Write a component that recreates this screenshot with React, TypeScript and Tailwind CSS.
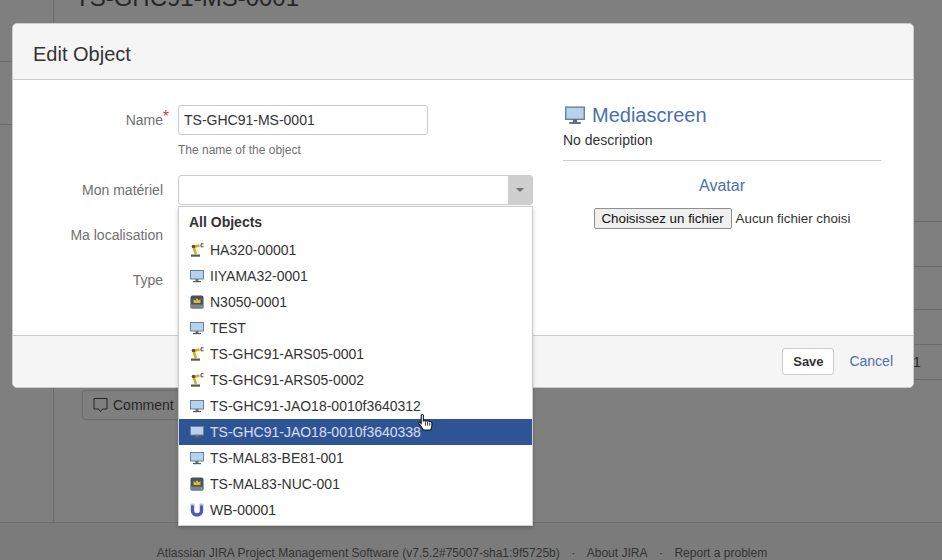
import React from 'react';

const OBJECTS = [
  { label: 'HA320-00001', icon: 'robot' },
  { label: 'IIYAMA32-0001', icon: 'screen' },
  { label: 'N3050-0001', icon: 'nuc' },
  { label: 'TEST', icon: 'screen' },
  { label: 'TS-GHC91-ARS05-0001', icon: 'robot' },
  { label: 'TS-GHC91-ARS05-0002', icon: 'robot' },
  { label: 'TS-GHC91-JAO18-0010f3640312', icon: 'screen' },
  { label: 'TS-GHC91-JAO18-0010f3640338', icon: 'screen', active: true },
  { label: 'TS-MAL83-BE81-001', icon: 'screen' },
  { label: 'TS-MAL83-NUC-001', icon: 'nuc' },
  { label: 'WB-00001', icon: 'magnet' },
];

function ScreenIcon({ size = 14 }: { size?: number }) {
  return (
    <svg width={size} height={size} viewBox="0 0 14 14">
      <rect x="0.5" y="1.5" width="13" height="8.5" fill="#b4d3ef" stroke="#71808c" />
      <rect x="5.5" y="10" width="3" height="2" fill="#5f6f7c" />
      <rect x="3" y="12" width="8" height="1.2" fill="#4f5d68" />
    </svg>
  );
}

function RobotIcon() {
  return (
    <svg width="14" height="14" viewBox="0 0 14 14">
      <path d="M6 11L3.500 4l6-1.500" fill="none" stroke="#dcaa1e" strokeWidth="2.600" />
      <circle cx="3.500" cy="3.500" r="1.800" fill="#57523a" />
      <path d="M13.500 .8h-2.500v3h2.500" fill="none" stroke="#4a4a3a" />
      <rect x="1" y="11.500" width="9" height="2.200" fill="#5b5b4a" />
    </svg>
  );
}

function NucIcon() {
  return (
    <svg width="14" height="14" viewBox="0 0 14 14">
      <rect x="0.5" y="0.5" width="13" height="13" rx="2" fill="#46535e" />
      <rect x="0.5" y="9.5" width="13" height="4" rx="1" fill="#75838d" />
      <path d="M3.500 8V3.800l1.800 1.700L7 3l1.700 2.500 1.800-1.700V8z" fill="#e3b92d" />
      <rect x="10.500" y="11" width="1.500" height="1.200" fill="#6cc04a" />
    </svg>
  );
}

function MagnetIcon() {
  return (
    <svg width="14" height="14" viewBox="0 0 14 14">
      <path d="M2.500 1v6.500a4.500 4.500 0 0 0 9 0V1" fill="none" stroke="#5257bd" strokeWidth="3.400" />
      <path d="M.8 1.500h3.400M9.800 1.500h3.400" stroke="#b9bde8" strokeWidth="2" />
    </svg>
  );
}

function ObjectIcon({ name }: { name: string }) {
  if (name === 'robot') return <RobotIcon />;
  if (name === 'nuc') return <NucIcon />;
  if (name === 'magnet') return <MagnetIcon />;
  return <ScreenIcon />;
}

function HandCursor() {
  return (
    <svg width="16" height="20" viewBox="0 0 15 18">
      <path
        d="M3 2c0-1.300 2-1.300 2 0v5.500c0-1 2-1 2 0 0-.8 2-.8 2 .2 0-.7 2-.7 2 .3 .2-.6 2-.5 2 .5v3.500l-1 3.500H5l-3-4.500L.7 9.500C.3 8.500 1.500 8 2.200 8.700L3 9.500z"
        fill="#fff"
        stroke="#111"
        strokeWidth="1"
      />
      <path d="M7 8v3.500M9 8v3.500M11 8.500v3" stroke="#111" strokeWidth="0.8" />
    </svg>
  );
}

function FieldLabel({ children }: { children: React.ReactNode }) {
  return <label className="w-[150px] text-right text-[#707070]">{children}</label>;
}

function Backdrop() {
  return (
    <div className="flex h-full flex-col bg-[#7f7f7f] text-[#262626]">
      <div className="flex min-h-0 flex-1">
        <div className="w-[54px] shrink-0 border-r border-[#6c6c6c]">
          <div className="h-[62px] border-b border-[#6c6c6c]" />
          <div className="h-[63px] border-b border-[#6c6c6c]" />
        </div>
        <div className="min-w-0 flex-1">
          <div className="-mt-[16px] pl-[21px] text-[24px] leading-[28px]">TS-GHC91-MS-0001</div>
          <div className="mt-[209px] ml-auto flex w-[28px] flex-col">
            <div className="h-[45px] border-t border-[#6c6c6c]" />
            <div className="h-[43px] border-t border-[#6c6c6c]" />
            <div className="h-[35px] border-t border-[#6c6c6c]" />
            <div className="h-[36px] border-y border-[#6c6c6c] pt-[7px] text-[#262626]">
              <span className="-ml-[1px] block">1</span>
            </div>
          </div>
          <div className="ml-[28px] mt-[10px] flex h-[30px] w-[120px] items-center gap-[5px] rounded-[3px] border border-[#6c6c6c] pl-[10px]">
            <svg width="15" height="16" viewBox="0 0 15 16">
              <path d="M1 1.500h13v10.500h-4.500l-2 2.500-2-2.500H1z" fill="none" stroke="#262626" />
            </svg>
            <span>Comment</span>
          </div>
        </div>
      </div>
      <div className="flex h-[38px] items-start justify-center gap-[11.5px] border-t border-[#6c6c6c] bg-[#7b7b7b] pr-[18px] pt-[22px] text-[12px] leading-[16px] text-[#333]">
        <span>Atlassian JIRA Project Management Software (v7.5.2#75007-sha1:9f5725b)</span>
        <span>·</span>
        <span>About JIRA</span>
        <span>·</span>
        <span>Report a problem</span>
      </div>
    </div>
  );
}

function ObjectMenu() {
  return (
    <div className="absolute left-[165px] top-[126px] z-10 h-[320px] w-[355px] border border-[#cccccc] bg-white shadow-[0_2px_4px_rgba(0,0,0,0.2)]">
      <div className="pl-[10px] pt-[7px] text-[14px] font-bold leading-[16px] text-[#333]">All Objects</div>
      <ul className="mt-[7px]">
        {OBJECTS.map((item) => (
          <li
            key={item.label}
            className={
              item.active
                ? 'flex h-[26px] items-center gap-[6px] bg-[#2f5496] pl-[11px] text-[#ffffff]/80'
                : 'flex h-[26px] items-center gap-[6px] pl-[11px] text-[#333]'
            }
          >
            <ObjectIcon name={item.icon} />
            <span>{item.label}</span>
          </li>
        ))}
      </ul>
      <div className="absolute left-[239px] top-[206px]">
        <HandCursor />
      </div>
    </div>
  );
}

function EditDialog() {
  return (
    <div className="absolute left-[12px] top-[23px] flex h-[365px] w-[902px] flex-col rounded-[5px] border border-[#cccccc] bg-white text-[14px] leading-[20px] text-[#333]">
      <div className="flex h-[56px] shrink-0 items-center rounded-t-[5px] border-b border-[#cccccc] bg-[#f5f5f5] pl-[20px] pt-[4px] text-[20px]">
        Edit Object
      </div>
      <div className="relative flex flex-1">
        <form className="w-[520px] shrink-0 pt-[25px]">
          <div className="flex items-center gap-[15px]">
            <FieldLabel>
              <span className="relative">
                Name
                <span className="absolute -right-[6px] -top-[3px] text-[16px] leading-[16px] text-[#d04437]">*</span>
              </span>
            </FieldLabel>
            <div className="flex h-[30px] w-[250px] items-center rounded-[3px] border border-[#cccccc] pl-[5px]">
              TS-GHC91-MS-0001
            </div>
          </div>
          <div className="pl-[165px] pt-[7px] text-[12px] leading-[16px] text-[#707070]">The name of the object</div>
          <div className="mt-[17px] flex items-center gap-[15px]">
            <FieldLabel>Mon matériel</FieldLabel>
            <div className="flex h-[30px] w-[355px] justify-end rounded-[3px] border border-[#cccccc]">
              <div className="flex w-[24px] items-center justify-center bg-[#cfcfcf]">
                <div className="h-0 w-0 border-x-[4px] border-t-[4px] border-x-transparent border-t-[#707070]" />
              </div>
            </div>
          </div>
          <div className="mt-[20px] flex items-center gap-[15px]">
            <FieldLabel>Ma localisation</FieldLabel>
          </div>
          <div className="mt-[25px] flex items-center gap-[15px]">
            <FieldLabel>Type</FieldLabel>
          </div>
        </form>
        <aside className="ml-[30px] w-[318px] pt-[24px]">
          <div className="flex h-[22px] items-center gap-[7px] pl-[2px]">
            <ScreenIcon size={20} />
            <span className="text-[20px] text-[#4a6fb0]">Mediascreen</span>
          </div>
          <div className="mt-[4px]">No description</div>
          <div className="mt-[10px] border-t border-[#cccccc] pt-[15px] text-center text-[16px] text-[#4a6fb0]">
            Avatar
          </div>
          <div className="mt-[12px] flex items-center justify-center gap-[4px] text-[13.33px]">
            <span className="flex h-[21px] w-[138px] items-center justify-center rounded-[2px] border border-[#8f8f8f] bg-[#efefef] text-[#111]">
              Choisissez un fichier
            </span>
            <span>Aucun fichier choisi</span>
          </div>
        </aside>
        <ObjectMenu />
      </div>
      <div className="flex h-[52px] shrink-0 items-center justify-end gap-[15px] rounded-b-[5px] border-t border-[#cccccc] bg-[#f5f5f5] pr-[20px]">
        <button className="h-[27px] w-[52px] rounded-[3px] border border-[#cccccc] bg-white text-[13px] font-bold">
          Save
        </button>
        <a className="-mt-[1px] text-[#4a6fb0]">Cancel</a>
      </div>
    </div>
  );
}

export default function App() {
  return (
    <div
      className="relative h-[560px] w-[942px] overflow-hidden text-[14px] leading-[20px]"
      style={{ fontFamily: '"Liberation Sans", Arial, sans-serif' }}
    >
      <Backdrop />
      <EditDialog />
    </div>
  );
}
